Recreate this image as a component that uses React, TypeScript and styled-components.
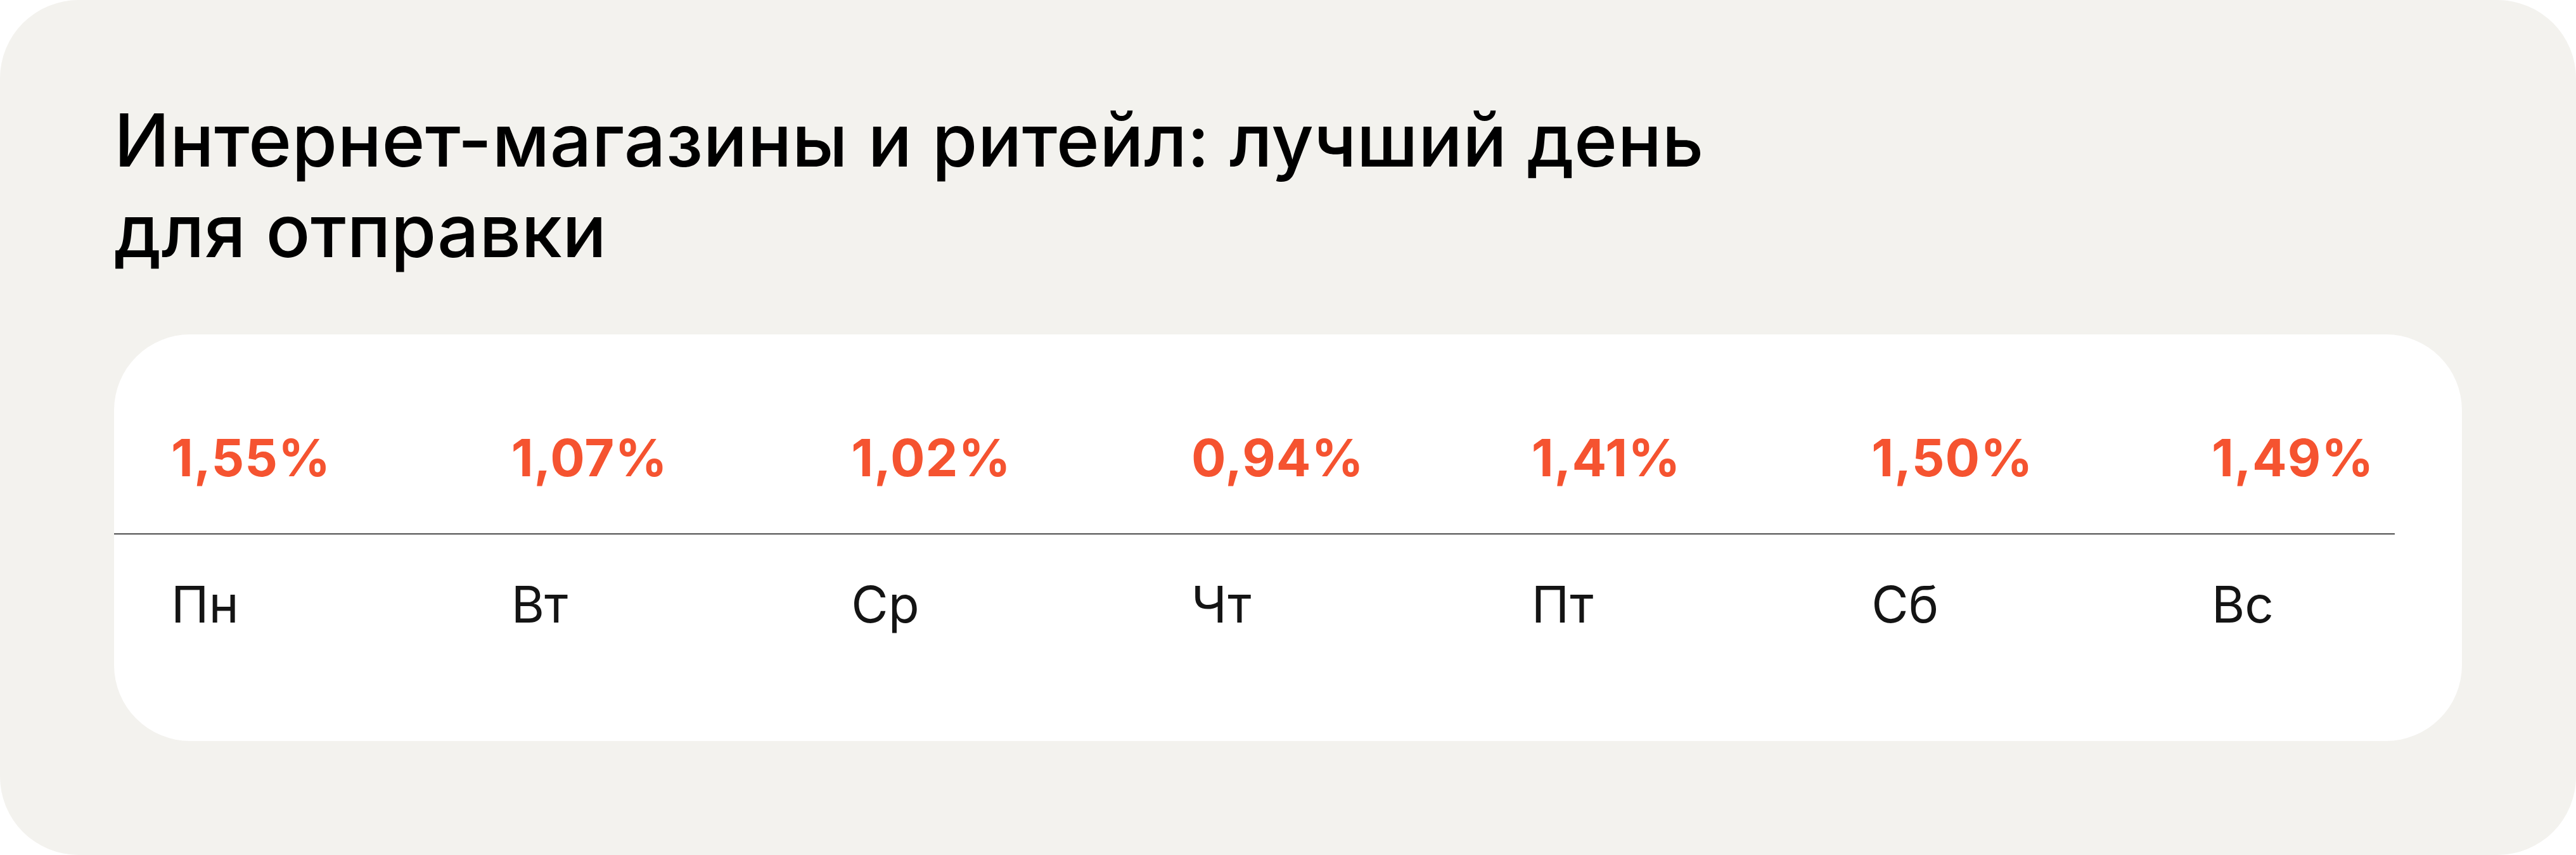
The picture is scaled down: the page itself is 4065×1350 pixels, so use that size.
import React from "react";
import styled, { createGlobalStyle } from "styled-components";

const GlobalStyle = createGlobalStyle`
  html, body {
    margin: 0;
    padding: 0;
    background: #ffffff;
  }
  body {
    font-family: Inter, "Noto Sans", "Liberation Sans", sans-serif;
  }
  * { box-sizing: border-box; }
`;

const Panel = styled.section`
  width: 4065px;
  height: 1350px;
  background: #f3f2ee;
  border-radius: 124px;
  padding: 150px 180px 0 180px;
  display: flex;
  flex-direction: column;
`;

const Title = styled.h1`
  margin: 0 0 92px 0;
  font-family: Inter, "Noto Sans", sans-serif;
  font-weight: 500;
  font-size: 116px;
  line-height: 143px;
  letter-spacing: 0.3px;
  color: #000000;
  max-width: 2600px;
`;

const Card = styled.div`
  background: #ffffff;
  border-radius: 120px;
  height: 642px;
  padding-top: 147px;
  display: flex;
  flex-direction: column;
`;

const Row = styled.div`
  display: grid;
  grid-template-columns: repeat(6, 536.67px) 1fr;
  padding-left: 90px;
`;

const Value = styled.span`
  font-family: Inter, "Noto Sans", sans-serif;
  font-weight: 700;
  font-size: 81px;
  line-height: 97px;
  letter-spacing: 1px;
  color: #f55330;
`;

const Day = styled.span`
  font-family: Inter, "Noto Sans", sans-serif;
  font-weight: 400;
  font-size: 80px;
  line-height: 96px;
  color: #141414;
`;

const Divider = styled.hr`
  border: none;
  height: 2px;
  background: #4f4f4f;
  margin: 70px 106px 62px 0;
`;

const data = [
  { value: "1,55%", day: "Пн" },
  { value: "1,07%", day: "Вт" },
  { value: "1,02%", day: "Ср" },
  { value: "0,94%", day: "Чт" },
  { value: "1,41%", day: "Пт" },
  { value: "1,50%", day: "Сб" },
  { value: "1,49%", day: "Вс" },
];

export default function App() {
  return (
    <>
      <GlobalStyle />
      <Panel>
        <Title>Интернет-магазины и ритейл: лучший день для отправки</Title>
        <Card>
          <Row>
            {data.map((d) => (
              <Value key={d.day}>{d.value}</Value>
            ))}
          </Row>
          <Divider />
          <Row>
            {data.map((d) => (
              <Day key={d.day}>{d.day}</Day>
            ))}
          </Row>
        </Card>
      </Panel>
    </>
  );
}
